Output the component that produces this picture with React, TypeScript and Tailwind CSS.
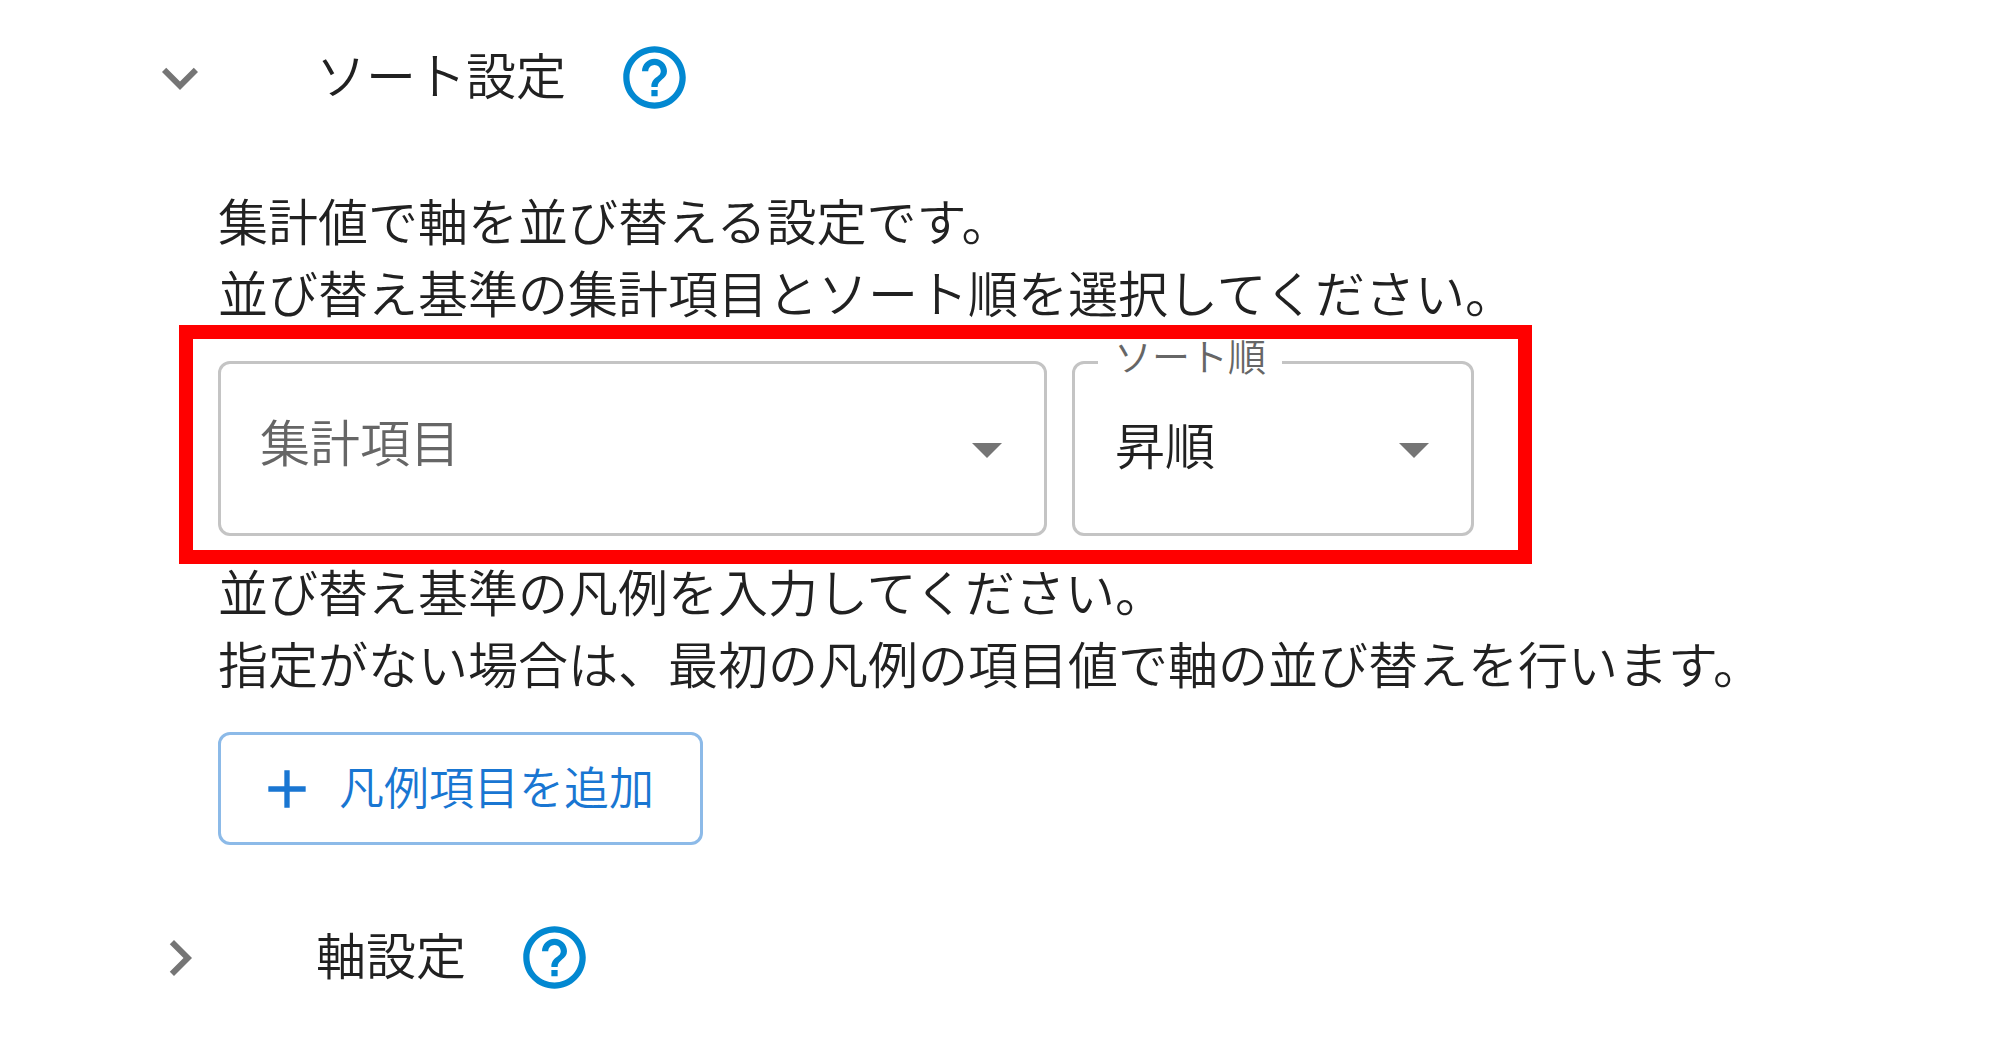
import React, { useState } from "react";

interface SectionHeaderProps {
  title: string;
  isOpen: boolean;
  onToggle: () => void;
}

interface SelectFieldProps {
  id: string;
  label: string;
  options: string[];
  value: string;
  onChange: (value: string) => void;
  className: string;
}

const SectionHeader = ({ title, isOpen, onToggle }: SectionHeaderProps) => {
  return (
    <div className="flex items-center pl-36">
      <button
        type="button"
        onClick={onToggle}
        aria-expanded={isOpen}
        aria-label={title}
        className="text-[#757575]"
      >
        <svg viewBox="0 0 24 24" fill="currentColor" className="size-[72px]">
          {isOpen ? (
            <path d="M16.59 8.59 12 13.17 7.41 8.59 6 10l6 6 6-6z" />
          ) : (
            <path d="M10 6 8.59 7.41 13.17 12l-4.58 4.59L10 18l6-6z" />
          )}
        </svg>
      </button>
      <h2 className="ml-[100px] pb-2.5 text-[50px] leading-[64px]">{title}</h2>
      <button
        type="button"
        aria-label={`${title}のヘルプ`}
        className="ml-[51px] text-[#0288d1]"
      >
        <svg viewBox="0 0 24 24" fill="currentColor" className="size-[75px]">
          <path d="M11 18h2v-2h-2v2zm1-16C6.48 2 2 6.48 2 12s4.48 10 10 10 10-4.48 10-10S17.52 2 12 2zm0 18c-4.41 0-8-3.59-8-8s3.59-8 8-8 8 3.59 8 8-3.59 8-8 8zm0-14c-2.21 0-4 1.79-4 4h2c0-1.1.9-2 2-2s2 .9 2 2c0 2-3 1.75-3 5h2c0-2.25 3-2.5 3-5 0-2.21-1.79-4-4-4z" />
        </svg>
      </button>
    </div>
  );
};

const SelectField = ({
  id,
  label,
  options,
  value,
  onChange,
  className,
}: SelectFieldProps) => {
  return (
    <div className={`relative ${className}`}>
      {/* the label moves up onto the border once a value is chosen */}
      <label
        htmlFor={id}
        className={
          value
            ? "absolute -top-[25px] left-[26px] bg-white px-4 text-[38px] leading-[38px] text-[#666666]"
            : "pointer-events-none absolute top-[43px] left-[42px] text-[50px] leading-[72px] text-[#666666]"
        }
      >
        {label}
      </label>
      <select
        id={id}
        value={value}
        onChange={(e) => onChange(e.target.value)}
        className="h-[175px] w-full appearance-none rounded-xl border-3 border-[#c4c4c4] bg-transparent pr-24 pb-3 pl-10 text-[50px]"
      >
        {!value && <option value="" />}
        {options.map((option) => (
          <option key={option} value={option}>
            {option}
          </option>
        ))}
      </select>
      <svg
        viewBox="0 0 24 24"
        fill="currentColor"
        className="pointer-events-none absolute top-[52px] right-6 size-[72px] text-[#757575]"
      >
        <path d="m7 10 5 5 5-5z" />
      </svg>
    </div>
  );
};

const App = () => {
  const [isSortOpen, setIsSortOpen] = useState<boolean>(true);
  const [isAxisOpen, setIsAxisOpen] = useState<boolean>(false);
  const [item, setItem] = useState<string>("");
  const [order, setOrder] = useState<string>("昇順");

  return (
    <main className="min-h-screen bg-white pt-10 font-['Noto_Sans_CJK_JP',sans-serif] font-[350] text-[#212121]">
      <SectionHeader
        title="ソート設定"
        isOpen={isSortOpen}
        onToggle={() => setIsSortOpen(!isSortOpen)}
      />

      {isSortOpen && (
        <section className="pt-[68px] pr-10 pb-[75px] pl-[218px] text-[50px] leading-[72px]">
          <p>
            集計値で軸を並び替える設定です。
            <br />
            並び替え基準の集計項目とソート順を選択してください。
          </p>

          <div className="relative mt-[34px] flex max-w-[1256px] gap-[25px]">
            <SelectField
              id="item"
              label="集計項目"
              options={["件数", "合計"]}
              value={item}
              onChange={setItem}
              className="flex-1"
            />
            <SelectField
              id="order"
              label="ソート順"
              options={["昇順", "降順"]}
              value={order}
              onChange={setOrder}
              className="w-[402px]"
            />
            {/* highlight frame */}
            <div className="pointer-events-none absolute -top-9 -right-[58px] -bottom-7 -left-[39px] border-14 border-[#ff0000]" />
          </div>

          <p className="mt-[18px]">
            並び替え基準の凡例を入力してください。
            <br />
            指定がない場合は、最初の凡例の項目値で軸の並び替えを行います。
          </p>

          <button
            type="button"
            className="mt-[34px] flex h-[113px] items-center gap-5 rounded-xl border-3 border-[#8cbae8] pr-[46px] pl-[34px] text-[45px] text-[#1976d2]"
          >
            <svg viewBox="0 0 24 24" fill="currentColor" className="size-16">
              <path d="M19 13h-6v6h-2v-6H5v-2h6V5h2v6h6z" />
            </svg>
            <span className="pb-1.5">凡例項目を追加</span>
          </button>
        </section>
      )}

      <SectionHeader
        title="軸設定"
        isOpen={isAxisOpen}
        onToggle={() => setIsAxisOpen(!isAxisOpen)}
      />
    </main>
  );
};

export default App;
